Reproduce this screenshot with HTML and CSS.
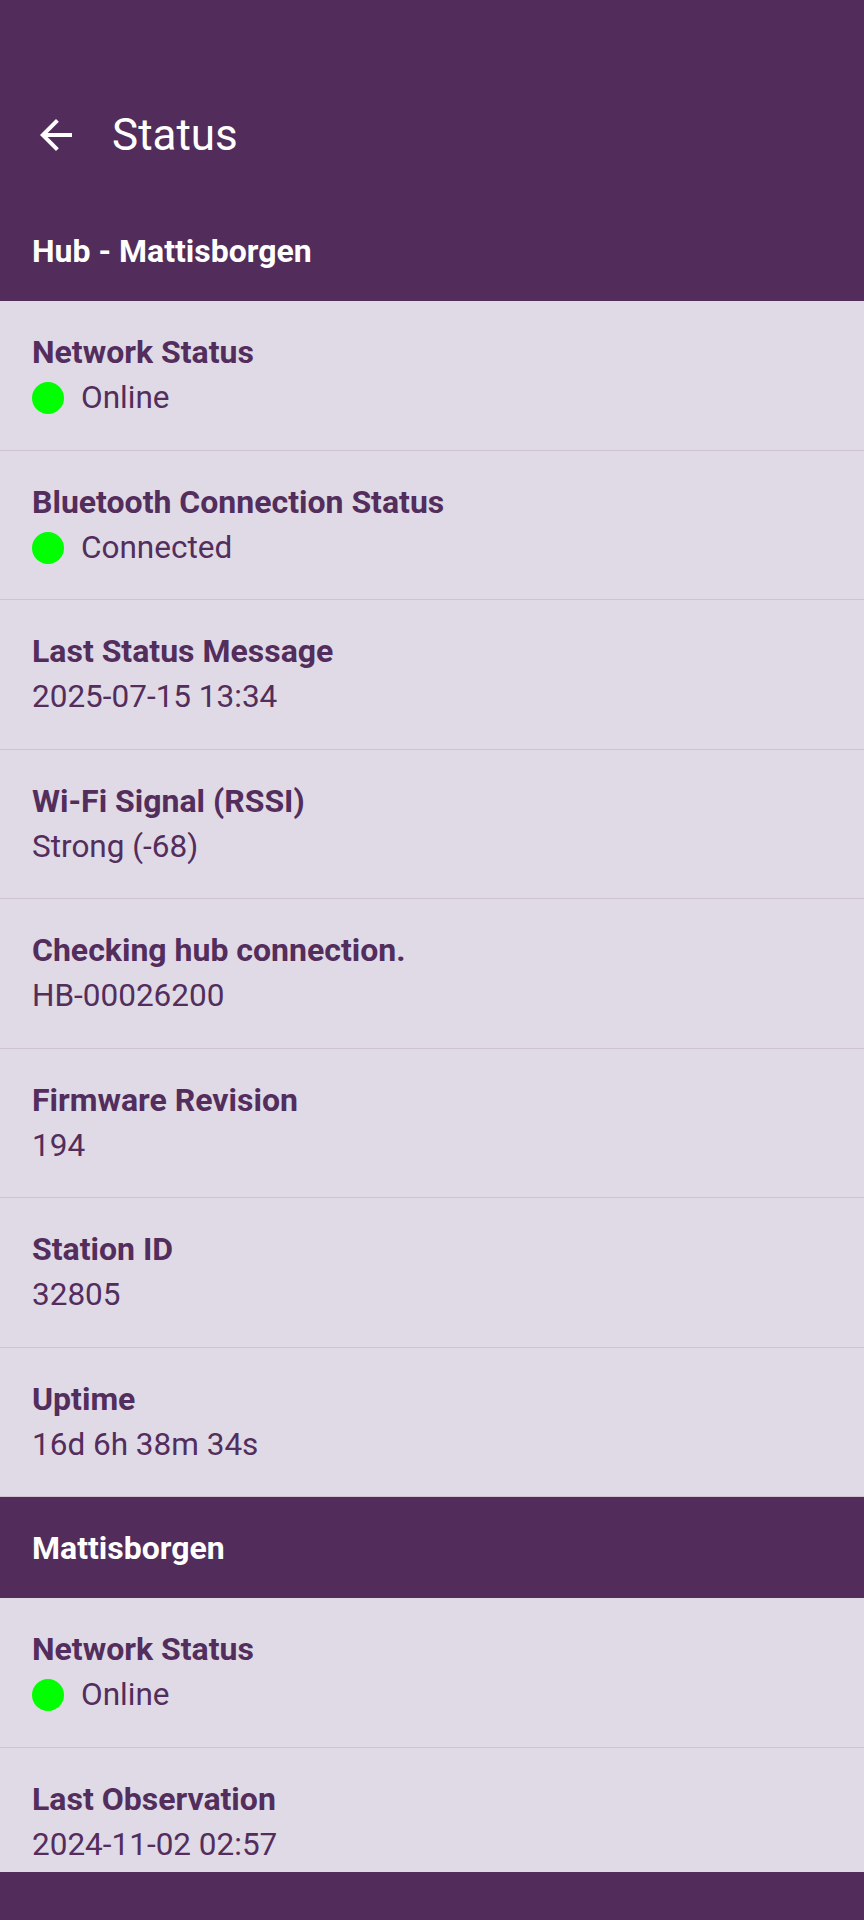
FILE: index.html
```html
<!DOCTYPE html>
<html lang="en">
<head>
    <meta charset="UTF-8">
    <meta name="viewport" content="width=device-width, initial-scale=1.0">
    <title>Status</title>
    <link rel="stylesheet" href="styles.css">
</head>
<body>
    <header class="app-bar">
        <div class="status-bar"></div>
        <div class="toolbar">
            <button class="back-button" aria-label="Back">
                <svg width="48" height="48" viewBox="0 0 24 24">
                    <path d="M20 11H7.83l5.59-5.59L12 4l-8 8 8 8 1.41-1.41L7.83 13H20v-2z" fill="#fff"/>
                </svg>
            </button>
            <h1 class="title">Status</h1>
        </div>
        <h2 class="section-title section-title-top">Hub - Mattisborgen</h2>
    </header>

    <!-- Hub details -->
    <ul class="status-list">
        <li class="status-item">
            <div class="item-label">Network Status</div>
            <div class="item-value"><span class="dot"></span>Online</div>
        </li>
        <li class="status-item">
            <div class="item-label">Bluetooth Connection Status</div>
            <div class="item-value"><span class="dot"></span>Connected</div>
        </li>
        <li class="status-item">
            <div class="item-label">Last Status Message</div>
            <div class="item-value">2025-07-15 13:34</div>
        </li>
        <li class="status-item">
            <div class="item-label">Wi-Fi Signal (RSSI)</div>
            <div class="item-value">Strong (-68)</div>
        </li>
        <li class="status-item">
            <div class="item-label">Checking hub connection.</div>
            <div class="item-value">HB-00026200</div>
        </li>
        <li class="status-item">
            <div class="item-label">Firmware Revision</div>
            <div class="item-value">194</div>
        </li>
        <li class="status-item">
            <div class="item-label">Station ID</div>
            <div class="item-value">32805</div>
        </li>
        <li class="status-item">
            <div class="item-label">Uptime</div>
            <div class="item-value">16d 6h 38m 34s</div>
        </li>
    </ul>

    <!-- Station details -->
    <h2 class="section-title">Mattisborgen</h2>
    <ul class="status-list">
        <li class="status-item">
            <div class="item-label">Network Status</div>
            <div class="item-value"><span class="dot"></span>Online</div>
        </li>
        <li class="status-item">
            <div class="item-label">Last Observation</div>
            <div class="item-value">2024-11-02 02:57</div>
        </li>
    </ul>

    <div class="nav-bar"></div>
</body>
</html>
```

FILE: styles.css
```css
body {
    margin: 0;
    font-family: Roboto, "Noto Sans", sans-serif;
    background-color: #dfdae6;
    color: #532d5b;
    height: 1920px;
    overflow: hidden;
}

.app-bar {
    background-color: #522c5a;
    color: #fff;
}

.status-bar {
    height: 74px;
}

.toolbar {
    height: 122px;
    display: flex;
    align-items: center;
    padding-left: 32px;
}

.back-button {
    width: 48px;
    height: 48px;
    padding: 0;
    margin-right: 32px;
    background: none;
    border: none;
    display: flex;
}

.title {
    margin: 0;
    font-size: 44px;
    font-weight: 400;
}

.section-title {
    margin: 0;
    height: 101px;
    display: flex;
    align-items: center;
    padding: 0 32px;
    background-color: #522c5a;
    color: #fff;
    font-size: 32px;
    font-weight: 700;
}

.section-title-top {
    height: 101px;
    padding-top: 4px;
}

.status-list {
    list-style: none;
    margin: 0;
    padding: 0;
}

.status-item {
    padding: 32px 32px 32.5px;
    border-bottom: 1px solid #cfc2d1;
}

.status-list:last-of-type .status-item:last-child {
    border-bottom: none;
}

.item-label {
    font-size: 32px;
    font-weight: 700;
    line-height: 38px;
}

.item-value {
    display: flex;
    align-items: center;
    margin-top: 8px;
    font-size: 31.5px;
    line-height: 38px;
}

.dot {
    width: 32px;
    height: 32px;
    border-radius: 50%;
    background-color: #00ff00;
    margin-right: 17px;
}

.nav-bar {
    position: fixed;
    left: 0;
    right: 0;
    bottom: 0;
    height: 48px;
    background-color: #522c5a;
}
```
